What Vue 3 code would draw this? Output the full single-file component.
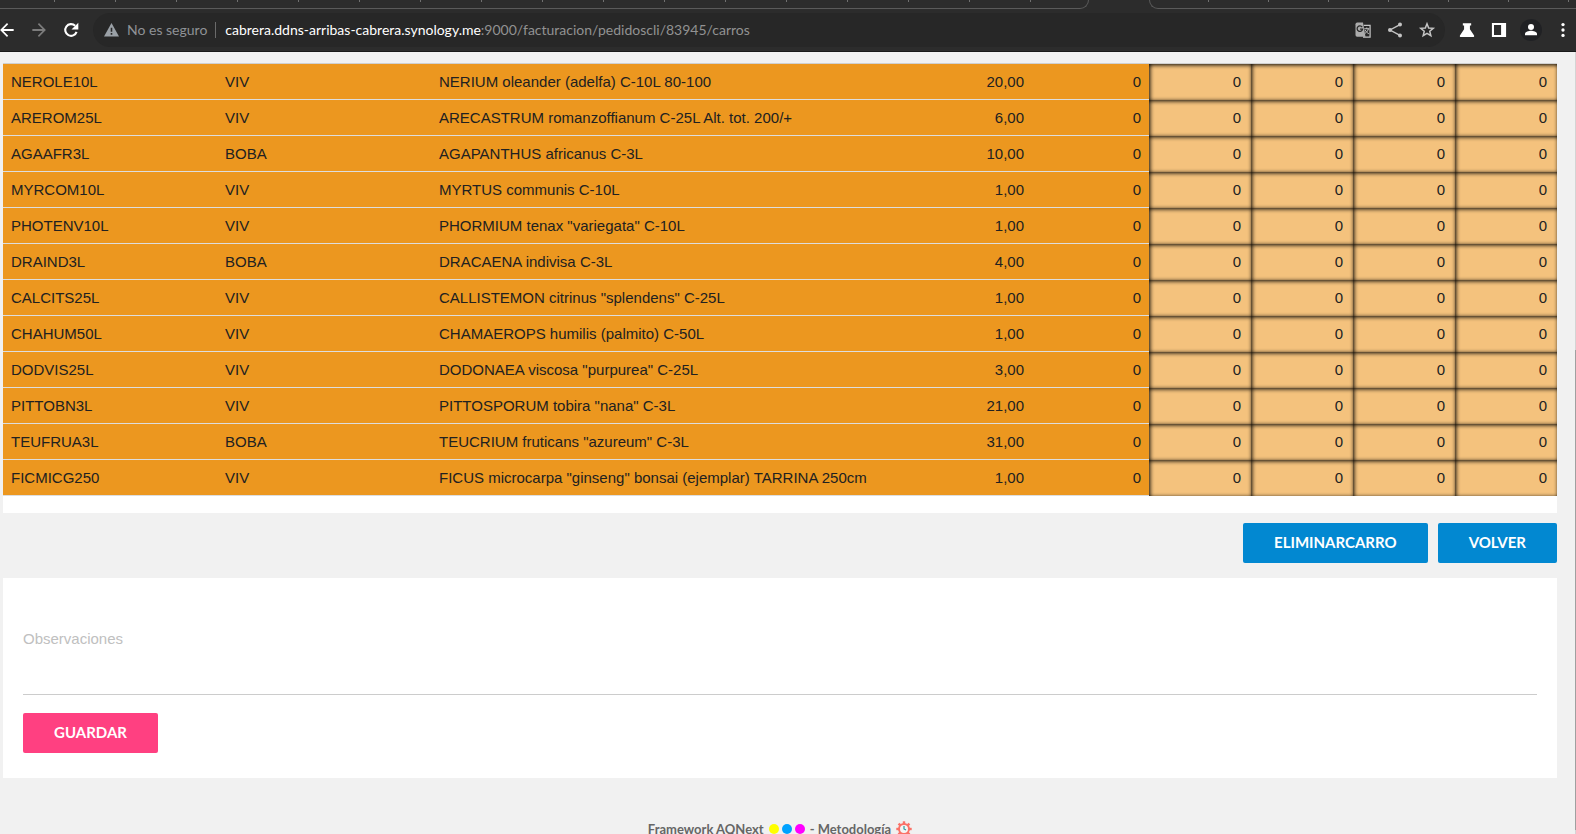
<script setup>
import { ref } from 'vue'

const rows = ref([
  ['NEROLE10L', 'VIV', 'NERIUM oleander (adelfa) C-10L 80-100', '20,00'],
  ['AREROM25L', 'VIV', 'ARECASTRUM romanzoffianum C-25L Alt. tot. 200/+', '6,00'],
  ['AGAAFR3L', 'BOBA', 'AGAPANTHUS africanus C-3L', '10,00'],
  ['MYRCOM10L', 'VIV', 'MYRTUS communis C-10L', '1,00'],
  ['PHOTENV10L', 'VIV', 'PHORMIUM tenax "variegata" C-10L', '1,00'],
  ['DRAIND3L', 'BOBA', 'DRACAENA indivisa C-3L', '4,00'],
  ['CALCITS25L', 'VIV', 'CALLISTEMON citrinus "splendens" C-25L', '1,00'],
  ['CHAHUM50L', 'VIV', 'CHAMAEROPS humilis (palmito) C-50L', '1,00'],
  ['DODVIS25L', 'VIV', 'DODONAEA viscosa "purpurea" C-25L', '3,00'],
  ['PITTOBN3L', 'VIV', 'PITTOSPORUM tobira "nana" C-3L', '21,00'],
  ['TEUFRUA3L', 'BOBA', 'TEUCRIUM fruticans "azureum" C-3L', '31,00'],
  ['FICMICG250', 'VIV', 'FICUS microcarpa "ginseng" bonsai (ejemplar) TARRINA 250cm', '1,00'],
].map(([code, family, name, qty]) => ({ code, family, name, qty, total: 0, carts: [0, 0, 0, 0] })))

const notes = ref('')
const teeth = [0, 45, 90, 135, 180, 225, 270, 315]
</script>

<template>
  <div class="window">
    <header class="chrome">
      <div class="tabs" aria-hidden="true">
        <div class="tab-group left"></div>
        <div class="tab-group right"></div>
      </div>
      <div class="toolbar">
        <nav class="tools nav">
          <button type="button" class="tool" aria-label="Atrás">
            <svg viewBox="0 0 24 24"><path d="M20 10.800H7.800l5.600-5.600L12 3.700l-8.300 8.300 8.300 8.300 1.400-1.500-5.600-5.600H20z" /></svg>
          </button>
          <button type="button" class="tool disabled" aria-label="Adelante">
            <svg viewBox="0 0 24 24"><path d="M4 13.200h12.200l-5.600 5.600L12 20.300l8.300-8.300L12 3.700l-1.400 1.500 5.600 5.600H4z" /></svg>
          </button>
          <button type="button" class="tool" aria-label="Recargar">
            <svg viewBox="0 0 24 24"><path d="M18.700 14.200A7 7 0 1 1 17 7" fill="none" stroke="currentColor" stroke-width="2.500" /><path d="M20.800 3.200v8.200h-8.200z" /></svg>
          </button>
        </nav>
        <div class="omnibox">
          <svg class="warn" viewBox="0 0 15 14"><path fill-rule="evenodd" d="M7.500 0 15 13.500H0zM6.700 4.800v4h1.600v-4zm0 5.300v1.600h1.600v-1.600z" /></svg>
          <span class="security">No es seguro</span>
          <span class="divider"></span>
          <span class="url"><b>cabrera.ddns-arribas-cabrera.synology.me</b>:9000/facturacion/pedidoscli/83945/carros</span>
          <button type="button" class="tool soft" aria-label="Traducir">
            <svg viewBox="0 0 24 24"><path d="M10 20H5a2 2 0 0 1-2-2V5a2 2 0 0 1 2-2h7l3 17z" opacity=".85" /><path d="M13 6.500h7.500v14H12" fill="none" stroke="currentColor" stroke-width="1.500" /><path d="M11 8.500A3.300 3.300 0 1 0 11.500 11H8.500" fill="none" stroke="#272727" stroke-width="1.500" /><path d="M13.500 10.500h6M16.500 9v1.500m2 0c-.5 2.500-2.300 4.500-4 5.500m0-4c1 1.700 2.700 3.600 4.500 4.500" fill="none" stroke="currentColor" stroke-width="1.200" /></svg>
          </button>
          <button type="button" class="tool soft" aria-label="Compartir">
            <svg viewBox="0 0 24 24"><path d="M18 5.500 6 12l12 6.500" fill="none" stroke="currentColor" stroke-width="1.700" /><circle cx="18" cy="5.500" r="2.400" /><circle cx="6" cy="12" r="2.400" /><circle cx="18" cy="18.500" r="2.400" /></svg>
          </button>
          <button type="button" class="tool soft" aria-label="Añadir a marcadores">
            <svg viewBox="0 0 24 24"><path d="m12 4.500 2 5 5.500.4-4.200 3.600 1.300 5.400-4.600-2.900-4.600 2.900 1.300-5.400-4.200-3.600 5.500-.4z" fill="none" stroke="currentColor" stroke-width="1.800" /></svg>
          </button>
        </div>
        <div class="tools end">
          <button type="button" class="tool" aria-label="Experimentos">
            <svg viewBox="0 0 24 24"><path d="M7 4h10v2.500h-1.500V11l4.800 7.300c.8 1.200.2 2.200-1 2.200H4.700c-1.200 0-1.800-1-1-2.200L8.500 11V6.500H7z" /></svg>
          </button>
          <button type="button" class="tool" aria-label="Panel lateral">
            <svg viewBox="0 0 24 24"><path fill-rule="evenodd" d="M3.500 3.500h17v17h-17zM6 6v12h8.500V6z" /></svg>
          </button>
          <button type="button" class="tool" aria-label="Perfil">
            <span class="avatar"><svg viewBox="0 0 24 24"><circle cx="12" cy="8" r="4" /><path d="M4 19v-2c0-2.700 5-4 8-4s8 1.300 8 4v2z" /></svg></span>
          </button>
          <button type="button" class="tool" aria-label="Menú">
            <svg viewBox="0 0 24 24"><circle cx="12" cy="5.500" r="2" /><circle cx="12" cy="12" r="2" /><circle cx="12" cy="18.500" r="2" /></svg>
          </button>
        </div>
      </div>
    </header>

    <div class="viewport">
      <main class="content">
        <section class="lines">
          <table>
            <colgroup>
              <col class="w-code"><col class="w-code"><col><col class="w-num"><col class="w-total">
              <col v-for="n in 4" :key="n" class="w-cart">
            </colgroup>
            <tbody>
              <tr v-for="row in rows" :key="row.code">
                <td>{{ row.code }}</td>
                <td>{{ row.family }}</td>
                <td>{{ row.name }}</td>
                <td class="num">{{ row.qty }}</td>
                <td class="num">{{ row.total }}</td>
                <td v-for="(cart, i) in row.carts" :key="i" class="num cart">{{ cart }}</td>
              </tr>
            </tbody>
          </table>
        </section>

        <div class="actions">
          <button type="button" class="btn">ELIMINARCARRO</button>
          <button type="button" class="btn">VOLVER</button>
        </div>

        <form class="card" @submit.prevent>
          <textarea v-model="notes" aria-label="Observaciones" placeholder="Observaciones"></textarea>
          <button type="submit" class="btn save">GUARDAR</button>
        </form>

        <footer>
          <span>Framework AQNext</span>
          <span class="dots"><i class="yellow"></i><i class="blue"></i><i class="pink"></i></span>
          <span>- Metodología</span>
          <svg class="gear" viewBox="0 0 16 16">
            <g fill="#fa7268"><rect v-for="a in teeth" :key="a" x="6.800" y="0.300" width="2.400" height="3" :transform="`rotate(${a} 8 8)`" /></g>
            <circle cx="8" cy="8" r="5" fill="#f5f5f5" stroke="#fa7268" stroke-width="2" />
            <path d="M8 5v3l2 1" fill="none" stroke="#2b9c9c" stroke-width="1.200" />
          </svg>
        </footer>
      </main>
      <div class="scroll" aria-hidden="true"><div class="thumb"></div></div>
    </div>
  </div>
</template>

<style>
body { margin: 0; background: #f1f1f1; }
</style>

<style scoped>
* { box-sizing: border-box; }
.window {
  display: flex;
  flex-direction: column;
  height: 100vh;
  overflow: hidden;
  background: #f1f1f1;
  color: #212121;
  font: 15px/20px "Liberation Sans", Arial, sans-serif;
}
button { border: 0; padding: 0; font: inherit; color: inherit; background: none; cursor: pointer; }

.chrome { flex: none; background: #2c2c2c; border-bottom: 1px solid #191919; }
.tabs { display: flex; gap: 60px; height: 9px; }
.tab-group {
  border-bottom: 1px solid #5a5a5a;
  background-repeat: repeat-x;
  background-size: 61px 2px;
}
.tab-group.left {
  flex: 1089;
  border-right: 1px solid #5a5a5a;
  border-bottom-right-radius: 9px;
  background-image: linear-gradient(90deg, transparent 54px, #707070 54px, #707070 55px, transparent 55px);
}
.tab-group.right {
  flex: 427;
  border-left: 1px solid #5a5a5a;
  border-bottom-left-radius: 9px;
  background-size: 60px 2px;
  background-image: linear-gradient(90deg, transparent 58px, #707070 58px, #707070 59px, transparent 59px);
}
.toolbar { display: flex; align-items: center; gap: 6px; height: 42px; color: #fff; }
.tools { display: flex; }
.nav { margin-left: -9px; }
.end { margin-right: -3px; }
.tool { display: flex; align-items: center; justify-content: center; flex: none; width: 32px; height: 32px; }
.tool svg { width: 20px; height: 20px; fill: currentColor; }
.tool.disabled { color: #7c7c7c; }
.tool.soft { color: #c4c4c4; }
.avatar {
  display: flex;
  align-items: center;
  justify-content: center;
  width: 22px;
  height: 22px;
  border-radius: 50%;
  background: #202124;
}
.avatar svg { width: 18px; height: 18px; }
.omnibox {
  display: flex;
  align-items: center;
  flex: 1;
  min-width: 0;
  height: 34px;
  padding: 0 2px 0 11px;
  border-radius: 17px;
  background: #272727;
  font: 14px/20px Lato, sans-serif;
  white-space: nowrap;
}
.warn { flex: none; width: 15px; height: 14px; margin-right: 8px; fill: #9aa0a6; }
.security { color: #8f9296; }
.divider { width: 1px; height: 16px; margin: 0 9px 0 8px; background: #6a6a6a; }
.url { flex: 1; overflow: hidden; color: #929292; }
.url b { font-weight: 400; color: #fff; }

.viewport { display: flex; flex: 1; min-height: 0; }
.content { flex: 1; min-width: 0; padding: 11px 18px 0 3px; }
.scroll { flex: none; width: 1px; padding-top: 298px; background: #d4d4d4; }
.thumb { height: 480px; background: #a0a0a0; }

.lines { padding-bottom: 17px; background: #fff; }
table {
  width: 100%;
  table-layout: fixed;
  border-collapse: separate;
  border-spacing: 0;
  border-top: 1px solid #d0d0d0;
}
.w-code { width: 214px; }
.w-num { width: 115px; }
.w-total { width: 117px; }
.w-cart { width: 102px; }
td {
  height: 36px;
  padding: 0 8px;
  overflow: hidden;
  white-space: nowrap;
  border-bottom: 1px solid #ddd;
  background: #ec971f;
}
.num { text-align: right; }
td.cart {
  padding-right: 10px;
  border-bottom: 0;
  background: #f4c27d;
  box-shadow: inset 1px 1px 4px #000;
}

.actions { display: flex; justify-content: flex-end; gap: 10px; padding: 10px 0 15px; }
.btn {
  height: 40px;
  padding: 0 31px 3px;
  border-radius: 2px;
  background: #0288d1;
  color: #fff;
  font-family: Lato, sans-serif;
  font-size: 15px;
  font-weight: 700;
}
.card { padding: 50px 20px 25px; background: #fff; }
textarea {
  display: block;
  width: 100%;
  height: 67px;
  margin-bottom: 18px;
  padding: 1px 0;
  border: 0;
  border-bottom: 1px solid #ccc;
  outline: 0;
  resize: none;
  background: none;
  font: inherit;
  color: inherit;
}
textarea::placeholder { color: #c0c0c0; opacity: 1; }
.save { background: #ff4081; }

footer {
  display: flex;
  align-items: center;
  justify-content: center;
  gap: 5px;
  margin-top: 41px;
  color: #666;
  font-family: Lato, sans-serif;
  font-size: 13px;
  font-weight: 700;
}
.dots { display: flex; gap: 3px; }
.dots i { width: 10px; height: 10px; border-radius: 50%; }
.yellow { background: #ff0; }
.blue { background: #00a2ff; }
.pink { background: #f0f; }
.gear { width: 16px; height: 16px; }
</style>
